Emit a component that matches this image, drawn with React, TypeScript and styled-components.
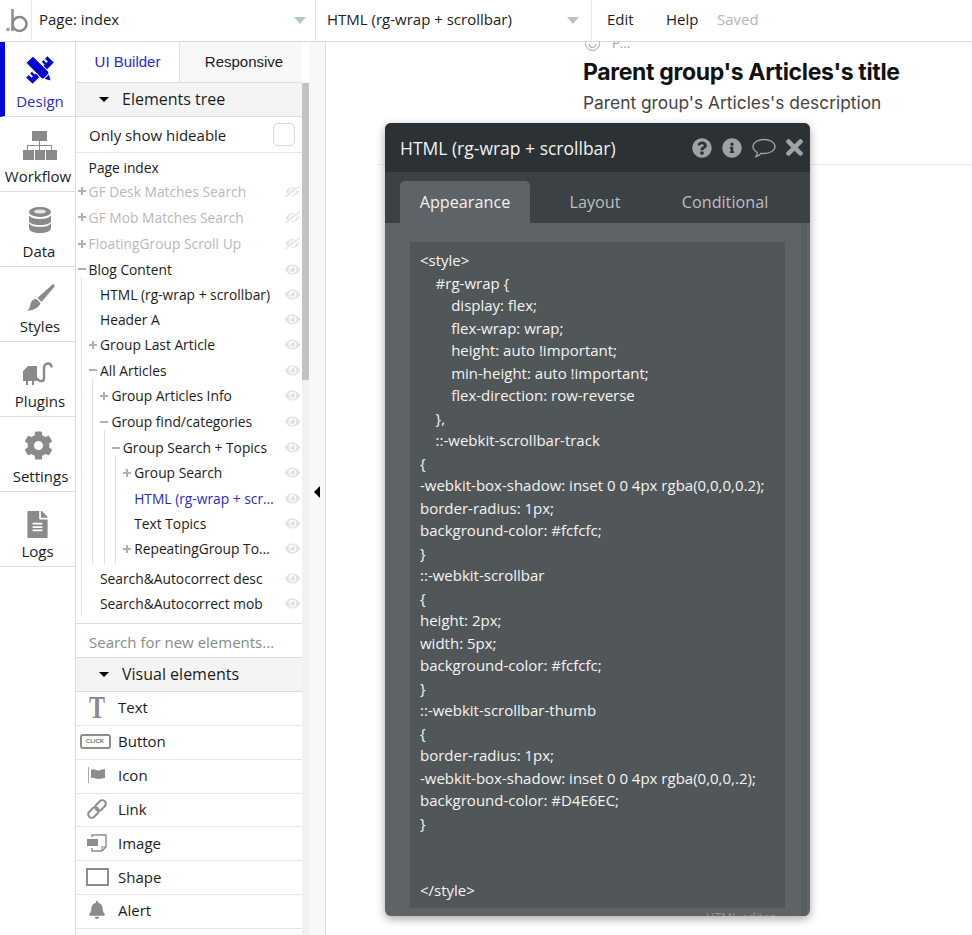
import React from "react";
import styled, { createGlobalStyle } from "styled-components";
import {
  FaCog,
  FaFileAlt,
  FaEye,
  FaEyeSlash,
  FaBell,
  FaQuestionCircle,
  FaInfoCircle,
  FaTimes,
} from "react-icons/fa";

const GlobalStyle = createGlobalStyle`
  html, body {
    margin: 0;
    padding: 0;
    height: 935px;
    overflow: hidden;
    background: #fff;
    font-family: "Open Sans", sans-serif;
  }
  * { box-sizing: border-box; }
`;

type TreeNode = {
  label: string;
  h: number;
  hidden?: boolean;
  active?: boolean;
  tail?: number;
  children?: TreeNode[];
  collapsed?: boolean;
};

const tree: TreeNode[] = [
  { label: "Page index", h: 23 },
  { label: "GF Desk Matches Search", h: 24, hidden: true, collapsed: true },
  { label: "GF Mob Matches Search", h: 28, hidden: true, collapsed: true },
  { label: "FloatingGroup Scroll Up", h: 25, hidden: true, collapsed: true },
  {
    label: "Blog Content",
    h: 26,
    children: [
      { label: "HTML (rg-wrap + scrollbar)", h: 25 },
      { label: "Header A", h: 25 },
      { label: "Group Last Article", h: 25, collapsed: true },
      {
        label: "All Articles",
        h: 26,
        children: [
          { label: "Group Articles Info", h: 25, collapsed: true },
          {
            label: "Group find/categories",
            h: 27,
            children: [
              {
                label: "Group Search + Topics",
                h: 25,
                tail: 4,
                children: [
                  { label: "Group Search", h: 25, collapsed: true },
                  { label: "HTML (rg-wrap + scrollbar)", h: 26, active: true },
                  { label: "Text Topics", h: 25 },
                  { label: "RepeatingGroup Topics", h: 25, collapsed: true },
                ],
              },
            ],
          },
        ],
      },
      { label: "Search&Autocorrect desc", h: 26 },
      { label: "Search&Autocorrect mob", h: 25 },
    ],
  },
];

const code = `<style>
    #rg-wrap {
        display: flex;
        flex-wrap: wrap;
        height: auto !important;
        min-height: auto !important;
        flex-direction: row-reverse
    },
    ::-webkit-scrollbar-track
{
-webkit-box-shadow: inset 0 0 4px rgba(0,0,0,0.2);
border-radius: 1px;
background-color: #fcfcfc;
}
::-webkit-scrollbar
{
height: 2px;
width: 5px;
background-color: #fcfcfc;
}
::-webkit-scrollbar-thumb
{
border-radius: 1px;
-webkit-box-shadow: inset 0 0 4px rgba(0,0,0,.2);
background-color: #D4E6EC;
}


</style>`;

const Page = styled.div`
  width: 972px;
  height: 935px;
  display: flex;
  flex-direction: column;
  overflow: hidden;
  position: relative;
  color: #1c1c1c;
`;

const TopBar = styled.header`
  height: 42px;
  flex: none;
  display: flex;
  align-items: stretch;
  border-bottom: 1px solid #d9d9d9;
  background: #fff;
  position: relative;
  z-index: 2;
`;

const LogoCell = styled.div`
  width: 32px;
  display: flex;
  align-items: center;
  justify-content: center;
  border-right: 1px solid #e8e8e8;
`;

const Dropdown = styled.div<{ $width: number }>`
  width: ${(p) => p.$width}px;
  display: flex;
  align-items: center;
  justify-content: space-between;
  padding: 0 9px 3px 7px;
  border-right: 1px solid #e8e8e8;
  font-size: 15px;
  & + & {
    padding-left: 11px;
    padding-right: 12px;
  }
`;

const Caret = styled.span`
  width: 0;
  height: 0;
  margin-top: 3px;
  border-left: 6px solid transparent;
  border-right: 6px solid transparent;
  border-top: 7px solid #b8c4cc;
`;

const MenuItem = styled.span<{ $muted?: boolean; $width: number }>`
  width: ${(p) => p.$width}px;
  align-self: center;
  margin-bottom: 3px;
  font-size: 15px;
  color: ${(p) => (p.$muted ? "#b5b5b5" : "#1c1c1c")};
`;

const Menu = styled.div`
  display: flex;
  padding-left: 15px;
`;

const Body = styled.div`
  flex: 1;
  display: flex;
  min-height: 0;
`;

const Nav = styled.nav`
  width: 76px;
  flex: none;
  border-right: 1px solid #dcdcdc;
`;

const NavItem = styled.div<{ $active?: boolean }>`
  height: 75px;
  display: flex;
  flex-direction: column;
  padding-bottom: 5px;
  font-size: 15px;
  border-bottom: 1px solid #e0e0e0;
  border-left: ${(p) => (p.$active ? "5px solid #0205d4" : "0")};
  color: ${(p) => (p.$active ? "#2a2ad0" : "#1c1c1c")};
  svg {
    color: ${(p) => (p.$active ? "#0205d4" : "#8a8a8a")};
  }
`;

const NavIcon = styled.div<{ $top: number; $shift: number }>`
  flex: 1;
  min-height: 0;
  display: flex;
  justify-content: center;
  align-items: flex-start;
  padding-top: ${(p) => p.$top}px;
  padding-left: ${(p) => p.$shift}px;
`;

const NavLabel = styled.div<{ $shift: number }>`
  text-align: center;
  line-height: 20px;
  padding-left: ${(p) => p.$shift}px;
`;

const Panel = styled.aside`
  width: 226px;
  flex: none;
  display: flex;
  flex-direction: column;
  overflow: hidden;
`;

const Tabs = styled.div`
  display: flex;
  height: 41px;
  flex: none;
  border-bottom: 1px solid #dcdcdc;
  font-family: "Liberation Sans", Arial, sans-serif;
  font-size: 15px;
`;

const PanelTab = styled.div<{ $active?: boolean }>`
  display: flex;
  align-items: center;
  justify-content: center;
  padding: 0 0 2px ${(p) => (p.$active ? 0 : 6)}px;
  width: ${(p) => (p.$active ? 104 : 122)}px;
  color: ${(p) => (p.$active ? "#2a2ad0" : "#1c1c1c")};
  background: ${(p) => (p.$active ? "#fff" : "#f8f8f8")};
  border-right: ${(p) => (p.$active ? "1px solid #e4e4e4" : "0")};
`;

const SectionHead = styled.div`
  height: 34px;
  flex: none;
  display: flex;
  align-items: center;
  gap: 13px;
  padding: 0 0 1px 23px;
  font-size: 16px;
  background: #f4f4f4;
  border-bottom: 1px solid #dcdcdc;
`;

const Triangle = styled.span`
  width: 0;
  height: 0;
  border-left: 5px solid transparent;
  border-right: 5px solid transparent;
  border-top: 5px solid #000;
`;

const HideableRow = styled.div`
  height: 36px;
  flex: none;
  display: flex;
  align-items: center;
  justify-content: space-between;
  padding: 0 7px 0 13px;
  font-size: 15px;
  border-bottom: 1px solid #e6e6e6;
`;

const Checkbox = styled.span`
  width: 22px;
  height: 23px;
  border: 1px solid #d8d8d8;
  border-radius: 5px;
`;

const TreeBox = styled.div`
  height: 470px;
  flex: none;
  padding-top: 3px;
  margin-left: -5.4px;
`;

const Group = styled.div<{ $tail?: number }>`
  margin: -5px 0 0 10.4px;
  padding: 5px 0 ${(p) => p.$tail ?? 0}px;
  border-left: 1px solid #e2e2e2;
`;

const Row = styled.div<{ $h: number; $hidden?: boolean; $active?: boolean }>`
  height: ${(p) => p.$h}px;
  display: flex;
  align-items: center;
  padding: 0 2px 0 18px;
  font-size: 13.8px;
  color: ${(p) => (p.$active ? "#2a2ad0" : p.$hidden ? "#b9b9b9" : "#1c1c1c")};
`;

const RowLabel = styled.span`
  flex: 1;
  min-width: 0;
  overflow: hidden;
  white-space: nowrap;
  text-overflow: ellipsis;
  padding-right: 10px;
`;

const Marker = styled.svg`
  width: 8px;
  height: 8px;
  margin-left: -11px;
  margin-right: 3px;
  flex: none;
  fill: #b0b0b0;
`;

const EyeSlot = styled.span<{ $off?: boolean }>`
  width: 15px;
  display: flex;
  flex: none;
  color: ${(p) => (p.$off ? "#e6e6e6" : "#e2e2e2")};
  svg {
    width: 15px;
    height: 15px;
    transform: ${(p) => (p.$off ? "scaleX(-1)" : "none")};
  }
`;

const SearchBox = styled.div`
  height: 35px;
  flex: none;
  display: flex;
  align-items: center;
  padding: 2px 0 0 13px;
  color: #8a8a8a;
  font-size: 15px;
  border-top: 1px solid #dcdcdc;
  border-bottom: 1px solid #dcdcdc;
`;

const ElementRow = styled.div`
  height: 33.85px;
  flex: none;
  display: flex;
  align-items: center;
  padding-bottom: 2px;
  font-size: 15px;
  border-bottom: 1px solid #e6e6e6;
`;

const ElementIcon = styled.span`
  width: 42px;
  padding: 0 5px;
  flex: none;
  display: flex;
  align-items: center;
  justify-content: center;
  color: #8a8a8a;
`;

const SerifT = styled.span`
  font: bold 24px "Liberation Serif", serif;
  line-height: 24px;
  color: #8a8a8a;
  transform: scaleY(1.35);
`;

const ClickBadge = styled.span`
  width: 31px;
  height: 15px;
  flex: none;
  margin-left: -4px;
  border: 2px solid #8d8d8d;
  border-radius: 3px;
  display: flex;
  align-items: center;
  justify-content: center;
  font: bold 6px "Liberation Sans", sans-serif;
  color: #777;
`;

const ShapeBox = styled.span`
  width: 23px;
  height: 18px;
  flex: none;
  border: 2px solid #8d8d8d;
`;

const Scrollbar = styled.div`
  width: 7px;
  flex: none;
  margin-top: 41px;
  background: #f1f1f1;
`;

const ScrollThumb = styled.div`
  height: 297px;
  background: #c3c3c3;
`;

const Strip = styled.div`
  width: 17px;
  flex: none;
  display: flex;
  align-items: flex-start;
  justify-content: center;
  padding-top: 444px;
  background: #f8f8f8;
  border-right: 1px solid #dcdcdc;
`;

const StripArrow = styled.span`
  width: 0;
  height: 0;
  border-top: 6px solid transparent;
  border-bottom: 6px solid transparent;
  border-right: 6px solid #000;
`;

const Canvas = styled.main`
  flex: 1;
  min-width: 0;
  padding-left: 51px;
  font-family: Inter, sans-serif;
`;

const Article = styled.div`
  height: 123px;
  padding-left: 206px;
  border-bottom: 1px solid #ececec;
  overflow: hidden;
`;

const Meta = styled.div`
  height: 9px;
  display: flex;
  align-items: flex-end;
  gap: 12px;
  padding-left: 2px;
  font-size: 13px;
  line-height: 16px;
  color: #9aa2a8;
  font-family: "Open Sans", sans-serif;
`;

const MetaIcon = styled.svg`
  width: 15px;
  height: 15px;
  flex: none;
  fill: none;
  stroke: #a5a5a5;
`;

const ArticleTitle = styled.h1`
  margin: 6px 0 0;
  font-size: 23px;
  line-height: 30px;
  font-weight: 700;
  color: #111;
  letter-spacing: -0.34px;
`;

const ArticleDesc = styled.p`
  margin: 4px 0 0;
  font-size: 17.35px;
  line-height: 24px;
  color: #444;
`;

const Dialog = styled.section`
  position: absolute;
  left: 385px;
  top: 123px;
  width: 425px;
  height: 793px;
  display: flex;
  flex-direction: column;
  overflow: hidden;
  border-radius: 6px;
  background: #5e6367;
  box-shadow: 0 3px 10px rgba(0, 0, 0, 0.35);
  z-index: 3;
`;

const DialogHead = styled.div`
  height: 49px;
  flex: none;
  display: flex;
  align-items: center;
  justify-content: space-between;
  padding: 0 7px 0 15px;
  background: #2b3134;
  color: #f2f2f2;
  font-size: 17.5px;
  font-weight: 500;
`;

const HeadIcons = styled.div`
  display: flex;
  align-items: center;
  gap: 10px;
  color: #9da3a5;
  svg {
    width: 20px;
    height: 20px;
  }
  svg:nth-child(3) {
    width: 24px;
  }
  svg:last-child {
    width: 17px;
    height: 25px;
  }
`;

const DialogTabs = styled.div`
  height: 51px;
  flex: none;
  display: flex;
  align-items: flex-end;
  padding-left: 15px;
  background: #3c4144;
`;

const DialogTab = styled.div<{ $active?: boolean; $width: number }>`
  width: ${(p) => p.$width}px;
  height: 42px;
  display: flex;
  align-items: center;
  justify-content: center;
  padding-bottom: 1px;
  border-radius: 5px 5px 0 0;
  font-size: 16.2px;
  font-weight: ${(p) => (p.$active ? 500 : 400)};
  background: ${(p) => (p.$active ? "#5e6367" : "transparent")};
  color: ${(p) => (p.$active ? "#f2f2f2" : "#bcbfc1")};
`;

const DialogBody = styled.div`
  flex: 1;
  min-height: 0;
  display: flex;
  padding: 19px 0 0 25px;
`;

const CodeBox = styled.pre`
  width: 375px;
  height: 666px;
  flex: none;
  margin: 0;
  padding: 7px 10px;
  background: #515659;
  color: #f4f4f4;
  font-family: "Open Sans", sans-serif;
  font-size: 15px;
  line-height: 22.5px;
  white-space: pre-wrap;
  overflow: hidden;
`;

const DialogScroll = styled.div`
  width: 6px;
  flex: none;
  margin: -19px 0 0 16px;
  background: #585d60;
`;

const Cut = styled.div`
  height: 8px;
  flex: none;
  overflow: hidden;
  font-size: 12px;
  color: #8e9396;
  text-align: right;
  padding-right: 35px;
  line-height: 8px;
  margin-top: -8px;
  padding-top: 6px;
`;

function Logo() {
  return (
    <svg width="28" height="26" viewBox="0 0 28 26" fill="none">
      <circle cx="6" cy="21.5" r="2" fill="#b0a79d" />
      <path d="M10.5 1v22" stroke="#8a8a8a" strokeWidth="2.4" />
      <circle cx="17.5" cy="16" r="7" stroke="#8a8a8a" strokeWidth="2.6" />
    </svg>
  );
}

function DesignIcon() {
  return (
    <svg width="28" height="28" viewBox="0 0 28 28" fill="currentColor">
      <g transform="rotate(-45 14 14)">
        <rect x="-1" y="9.500" width="30" height="9" />
        <path d="M2.500 9.500h2v4h-2zM7 9.500h2v4H7zM19 9.500h2v4h-2zM23.500 9.500h2v4h-2z" fill="#fff" />
      </g>
      <g transform="rotate(45 14 14)">
        <path d="M-1 9h22l9 5-9 5H-1z" stroke="#fff" strokeWidth="1" />
        <path d="M23 9.500v9" stroke="#fff" strokeWidth="1" />
      </g>
    </svg>
  );
}

function SitemapIcon() {
  return (
    <svg width="34" height="29" viewBox="0 0 34 29" fill="currentColor">
      <rect x="9" y="0" width="15" height="10" />
      <path d="M16 10h1v4h12v5h-1v-4H17v4h-1v-4H5v4H4v-5h12z" />
      <rect x="0" y="19" width="11" height="10" />
      <rect x="12" y="19" width="10" height="10" />
      <rect x="23" y="19" width="11" height="10" />
    </svg>
  );
}

function DataIcon() {
  return (
    <svg width="22" height="26" viewBox="0 0 22 26" fill="currentColor">
      <ellipse cx="11" cy="5" rx="11" ry="5" />
      <ellipse cx="11" cy="4.5" rx="6" ry="2" fill="#e4e4e4" />
      <path d="M0 8.5c2 2.5 6 3.5 11 3.5s9-1 11-3.5v5.5c0 2.5-5 4-11 4S0 16.500 0 14z" />
      <path d="M0 16.500c2 2.500 6 3.500 11 3.500s9-1 11-3.500V21c0 3-5 5-11 5S0 24 0 21z" />
    </svg>
  );
}

function BrushIcon() {
  return (
    <svg width="28" height="27" viewBox="0 0 28 27" fill="currentColor">
      <path d="M26 0l2 2-13.500 16L10.500 14z" />
      <path d="M9.500 15l4 4c-1 4-6 7-13.500 8 3-2 3-6 4-8.500C5 16 7 15 9.500 15z" />
    </svg>
  );
}

function PlugIcon() {
  return (
    <svg width="30" height="26" viewBox="0 0 30 26" fill="currentColor">
      <path d="M0 9l5-5h9v15h-3v4H9v-4H5v4H3v-4H0z" />
      <path
        d="M14 16c2 4 6 4 7 1V7c0-3 1-5.500 4-5.500s3.500 2 3.500 4"
        fill="none"
        stroke="currentColor"
        strokeWidth="2.400"
      />
    </svg>
  );
}

function FlagIcon() {
  return (
    <svg width="18" height="16" viewBox="0 0 18 16" fill="#8d8d8d">
      <rect x="0" y="0" width="1" height="16" fill="#a9a9a9" />
      <path d="M3 3c3-2 5 1 8 .500 2-.400 4-1.500 6-1.500v9c-2 0-4 1-6 1-3 0-5-2-8-1z" />
    </svg>
  );
}

function LinkIcon() {
  return (
    <svg width="20" height="20" viewBox="0 0 20 20" fill="none" stroke="#8d8d8d" strokeWidth="2">
      <g transform="rotate(-45 10 10)">
        <rect x="-1" y="6.500" width="12" height="7" rx="3.500" />
        <rect x="9" y="6.500" width="12" height="7" rx="3.500" />
      </g>
    </svg>
  );
}

function ImageIcon() {
  return (
    <svg width="20" height="18" viewBox="0 0 20 18" fill="none">
      <path d="M5 3V1h14v12l-4 4H5v-3" stroke="#8d8d8d" strokeWidth="1.400" />
      <path d="M15 17v-4h4" stroke="#8d8d8d" strokeWidth="1.200" />
      <rect x="0" y="5" width="11" height="7" fill="#8d8d8d" />
    </svg>
  );
}

function BubbleIcon() {
  return (
    <svg viewBox="0 0 24 20" fill="none" stroke="currentColor" strokeWidth="1.300">
      <path d="M12 1.500c6 0 11 3 11 7s-5 7-11 7c-1 0-2 0-3-.200-1 1.500-3 2.700-5 3.200.800-1 1.300-2.400 1.300-4C3 13 1 11 1 8.500c0-4 5-7 11-7z" />
    </svg>
  );
}

const navItems = [
  { label: "Design", icon: <DesignIcon />, top: 14, iconShift: 0, labelShift: 0, active: true },
  { label: "Workflow", icon: <SitemapIcon />, top: 14, iconShift: 5, labelShift: 1 },
  { label: "Data", icon: <DataIcon />, top: 15, iconShift: 5, labelShift: 3 },
  { label: "Styles", icon: <BrushIcon />, top: 17, iconShift: 7, labelShift: 5 },
  { label: "Plugins", icon: <PlugIcon />, top: 20, iconShift: 1, labelShift: 5 },
  { label: "Settings", icon: <FaCog size={29} />, top: 14, iconShift: 2, labelShift: 6 },
  { label: "Logs", icon: <FaFileAlt size={27} />, top: 19, iconShift: 0, labelShift: 0 },
];

function TreeRows({ nodes }: { nodes: TreeNode[] }) {
  return (
    <>
      {nodes.map((n, i) => (
        <React.Fragment key={i}>
          <Row $h={n.h} $hidden={n.hidden} $active={n.active}>
            {(n.collapsed || n.children) && (
              <Marker viewBox="0 0 8 8">
                <rect x="0" y="3" width="8" height="2" />
                {n.collapsed && <rect x="3" y="0" width="2" height="8" />}
              </Marker>
            )}
            <RowLabel>{n.label}</RowLabel>
            {n.label === "Page index" ? null : (
              <EyeSlot $off={n.hidden}>{n.hidden ? <FaEyeSlash /> : <FaEye />}</EyeSlot>
            )}
          </Row>
          {n.children && (
            <Group $tail={n.tail}>
              <TreeRows nodes={n.children} />
            </Group>
          )}
        </React.Fragment>
      ))}
    </>
  );
}

export default function App() {
  return (
    <Page>
      <GlobalStyle />
      <TopBar>
        <LogoCell>
          <Logo />
        </LogoCell>
        <Dropdown $width={284}>
          Page: index
          <Caret />
        </Dropdown>
        <Dropdown $width={276}>
          HTML (rg-wrap + scrollbar)
          <Caret />
        </Dropdown>
        <Menu>
          <MenuItem $width={59}>Edit</MenuItem>
          <MenuItem $width={51}>Help</MenuItem>
          <MenuItem $width={60} $muted>
            Saved
          </MenuItem>
        </Menu>
      </TopBar>
      <Body>
        <Nav>
          {navItems.map((item) => (
            <NavItem key={item.label} $active={item.active}>
              <NavIcon $top={item.top} $shift={item.iconShift}>
                {item.icon}
              </NavIcon>
              <NavLabel $shift={item.labelShift}>{item.label}</NavLabel>
            </NavItem>
          ))}
        </Nav>
        <Panel>
          <Tabs>
            <PanelTab $active>UI Builder</PanelTab>
            <PanelTab>Responsive</PanelTab>
          </Tabs>
          <SectionHead>
            <Triangle />
            Elements tree
          </SectionHead>
          <HideableRow>
            Only show hideable
            <Checkbox />
          </HideableRow>
          <TreeBox>
            <TreeRows nodes={tree} />
          </TreeBox>
          <SearchBox>Search for new elements...</SearchBox>
          <SectionHead>
            <Triangle />
            Visual elements
          </SectionHead>
          <ElementRow>
            <ElementIcon>
              <SerifT>T</SerifT>
            </ElementIcon>
            Text
          </ElementRow>
          <ElementRow>
            <ElementIcon>
              <ClickBadge>CLICK</ClickBadge>
            </ElementIcon>
            Button
          </ElementRow>
          <ElementRow>
            <ElementIcon>
              <FlagIcon />
            </ElementIcon>
            Icon
          </ElementRow>
          <ElementRow>
            <ElementIcon>
              <LinkIcon />
            </ElementIcon>
            Link
          </ElementRow>
          <ElementRow>
            <ElementIcon>
              <ImageIcon />
            </ElementIcon>
            Image
          </ElementRow>
          <ElementRow>
            <ElementIcon>
              <ShapeBox />
            </ElementIcon>
            Shape
          </ElementRow>
          <ElementRow>
            <ElementIcon>
              <FaBell size={18} />
            </ElementIcon>
            Alert
          </ElementRow>
        </Panel>
        <Scrollbar>
          <ScrollThumb />
        </Scrollbar>
        <Strip>
          <StripArrow />
        </Strip>
        <Canvas>
          <Article>
            <Meta>
              <MetaIcon viewBox="0 0 15 15">
                <circle cx="7.5" cy="7.500" r="7" />
                <path d="M4 8a3.500 3.500 0 0 0 7 0" />
              </MetaIcon>
              P...
            </Meta>
            <ArticleTitle>Parent group's Articles's title</ArticleTitle>
            <ArticleDesc>Parent group's Articles's description</ArticleDesc>
          </Article>
        </Canvas>
      </Body>
      <Dialog>
        <DialogHead>
          HTML (rg-wrap + scrollbar)
          <HeadIcons>
            <FaQuestionCircle />
            <FaInfoCircle />
            <BubbleIcon />
            <FaTimes />
          </HeadIcons>
        </DialogHead>
        <DialogTabs>
          <DialogTab $active $width={130}>
            Appearance
          </DialogTab>
          <DialogTab $width={130}>Layout</DialogTab>
          <DialogTab $width={130}>Conditional</DialogTab>
        </DialogTabs>
        <DialogBody>
          <CodeBox>{code}</CodeBox>
          <DialogScroll />
        </DialogBody>
        <Cut>HTML editor</Cut>
      </Dialog>
    </Page>
  );
}
